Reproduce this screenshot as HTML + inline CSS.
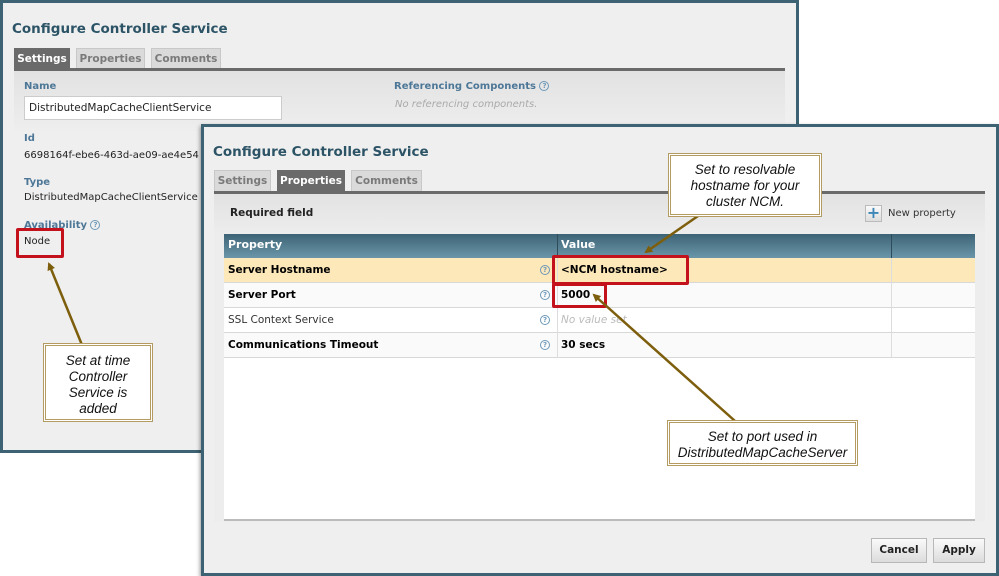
<!DOCTYPE html>
<html><head><meta charset="utf-8"><style>
*{margin:0;padding:0;box-sizing:border-box}
body{width:999px;height:576px;background:#fff;position:relative;overflow:hidden;font-family:"DejaVu Sans","Liberation Sans",sans-serif}
.dlg{position:absolute;background:#efefef;border:3px solid #3d6273}
.title{position:absolute;font-weight:bold;font-size:13.5px;color:#2c5466}
.tab{position:absolute;height:21px;background:#dadada;border:1px solid #c8c8c8;border-bottom:none;font-size:10.5px;font-weight:bold;color:#7a7a7a;text-align:center;line-height:20px}
.tab.on{background:#6a6a6a;color:#fff;border-color:#6a6a6a}
.line{position:absolute;height:3px;background:#6a6a6a}
.panel{position:absolute;background:linear-gradient(#e2e2e2,#eeeeee 60px)}
.lbl{position:absolute;font-size:10px;font-weight:bold;color:#4d7797}
.val{position:absolute;font-size:10px;color:#222}
.q{display:inline-block;width:10px;height:10px;border:1px solid #6d98b8;border-radius:50%;font-size:7px;line-height:8px;text-align:center;color:#6d98b8;font-weight:bold;vertical-align:middle}
.red{position:absolute;border:3px solid #c4121d;border-radius:2px}
.call{position:absolute;background:#fff;border:3px double #b39b62;font-family:"Liberation Sans",sans-serif;font-style:italic;font-size:13.5px;color:#111;text-align:center;line-height:16px}
.row{position:absolute;left:224px;width:751px;height:25px;border-bottom:1px solid #d8d8d8;font-size:10.5px}
.row div{position:absolute;top:0;height:24px;line-height:24px}
.btn{position:absolute;height:25px;background:linear-gradient(#fafafa,#dcdcdc);border:1px solid #b8b8b8;font-size:10.5px;font-weight:bold;color:#222;text-align:center;line-height:23px}
</style></head><body>

<div class="dlg" style="left:0;top:0;width:799px;height:453px"></div>
<div class="title" style="left:12px;top:21px">Configure Controller Service</div>
<div class="tab on" style="left:14px;top:48px;width:56px">Settings</div>
<div class="tab" style="left:76px;top:48px;width:69px">Properties</div>
<div class="tab" style="left:151px;top:48px;width:70px">Comments</div>
<div class="line" style="left:14px;top:68px;width:771px"></div>
<div class="panel" style="left:14px;top:71px;width:771px;height:60px"></div>
<div class="lbl" style="left:24px;top:81px">Name</div>
<div style="position:absolute;left:24px;top:96px;width:258px;height:24px;background:#fff;border:1px solid #ccc;font-size:10.5px;line-height:22px;padding-left:4px;color:#222">DistributedMapCacheClientService</div>
<div class="lbl" style="left:394px;top:81px">Referencing Components <span class="q">?</span></div>
<div class="val" style="left:395px;top:99px;color:#aaa;font-style:italic">No referencing components.</div>
<div class="lbl" style="left:24px;top:133px">Id</div>
<div class="val" style="left:24px;top:150px">6698164f-ebe6-463d-ae09-ae4e54</div>
<div class="lbl" style="left:24px;top:177px">Type</div>
<div class="val" style="left:24px;top:192px">DistributedMapCacheClientService</div>
<div class="lbl" style="left:24px;top:220px">Availability <span class="q">?</span></div>
<div class="val" style="left:24px;top:236px">Node</div>
<div class="red" style="left:16px;top:228px;width:48px;height:30px"></div>

<div class="dlg" style="left:201px;top:124px;width:798px;height:452px;box-shadow:-1px 2px 4px rgba(0,0,0,.4)"></div>
<div class="title" style="left:213px;top:144px">Configure Controller Service</div>
<div class="tab" style="left:214px;top:170px;width:57px">Settings</div>
<div class="tab on" style="left:277px;top:170px;width:68px">Properties</div>
<div class="tab" style="left:351px;top:170px;width:71px">Comments</div>
<div class="line" style="left:214px;top:191px;width:771px"></div>
<div class="panel" style="left:214px;top:194px;width:771px;height:328px;background:linear-gradient(#e2e2e2,#ededed 40px)"></div>
<div class="val" style="left:230px;top:207px;font-weight:bold;font-size:10.5px">Required field</div>
<div style="position:absolute;left:865px;top:205px;width:17px;height:17px;background:linear-gradient(#fafafa,#ddd);border:1px solid #bbb;color:#3e86b8;font-weight:bold;font-size:16px;line-height:14px;text-align:center">+</div>
<div class="val" style="left:888px;top:208px;color:#333">New property</div>
<div style="position:absolute;left:224px;top:234px;width:751px;height:287px;background:#fff;border-bottom:2px solid #bbb"></div>
<div style="position:absolute;left:224px;top:234px;width:751px;height:24px;background:linear-gradient(#3d6476,#6b95a9);color:#fff;font-size:11px;font-weight:bold;line-height:22px">
<span style="position:absolute;left:4px">Property</span><span style="position:absolute;left:337px">Value</span>
<span style="position:absolute;left:333px;top:0;width:1px;height:24px;background:#2e4c5a"></span>
<span style="position:absolute;left:667px;top:0;width:1px;height:24px;background:#2e4c5a"></span></div>
<div class="row" style="top:258px;background:#fde8b9"><div style="left:4px;font-weight:bold">Server Hostname</div><div style="left:316px"><span class="q">?</span></div><div style="left:337px;font-weight:bold">&lt;NCM hostname&gt;</div></div>
<div class="row" style="top:283px;background:#fafafa"><div style="left:4px;font-weight:bold">Server Port</div><div style="left:316px"><span class="q">?</span></div><div style="left:337px;font-weight:bold">5000</div></div>
<div class="row" style="top:308px;background:#fff"><div style="left:4px;color:#333">SSL Context Service</div><div style="left:316px"><span class="q">?</span></div><div style="left:337px;color:#bbb;font-style:italic">No value set</div></div>
<div class="row" style="top:333px;background:#fafafa"><div style="left:4px;font-weight:bold">Communications Timeout</div><div style="left:316px"><span class="q">?</span></div><div style="left:337px;font-weight:bold">30 secs</div></div>
<div style="position:absolute;left:557px;top:258px;width:1px;height:100px;background:#ddd"></div>
<div style="position:absolute;left:891px;top:258px;width:1px;height:100px;background:#ddd"></div>
<div class="btn" style="left:871px;top:538px;width:56px">Cancel</div>
<div class="btn" style="left:933px;top:538px;width:52px">Apply</div>

<div class="red" style="left:552px;top:255px;width:137px;height:30px"></div>
<div class="red" style="left:552px;top:283px;width:55px;height:25px"></div>

<svg style="position:absolute;left:0;top:0" width="999" height="576">
<defs><marker id="a" markerWidth="8" markerHeight="8" refX="6" refY="4" orient="auto" markerUnits="userSpaceOnUse"><path d="M0,0 L8,4 L0,8z" fill="#7d5e0c"/></marker></defs>
<g stroke="#7d5e0c" stroke-width="2.5" fill="none">
<line x1="698" y1="216" x2="646" y2="252" marker-end="url(#a)"/>
<line x1="735" y1="421" x2="594" y2="295" marker-end="url(#a)"/>
<line x1="82" y1="345" x2="49" y2="264" marker-end="url(#a)"/>
</g></svg>

<div class="call" style="left:668px;top:153px;width:154px;height:64px;padding-top:6px">Set to resolvable<br>hostname for your<br>cluster NCM.</div>
<div class="call" style="left:43px;top:343px;width:110px;height:79px;padding-top:7px">Set at time<br>Controller<br>Service is<br>added</div>
<div class="call" style="left:667px;top:420px;width:191px;height:46px;padding-top:6px">Set to port used in<br>DistributedMapCacheServer</div>
</body></html>
